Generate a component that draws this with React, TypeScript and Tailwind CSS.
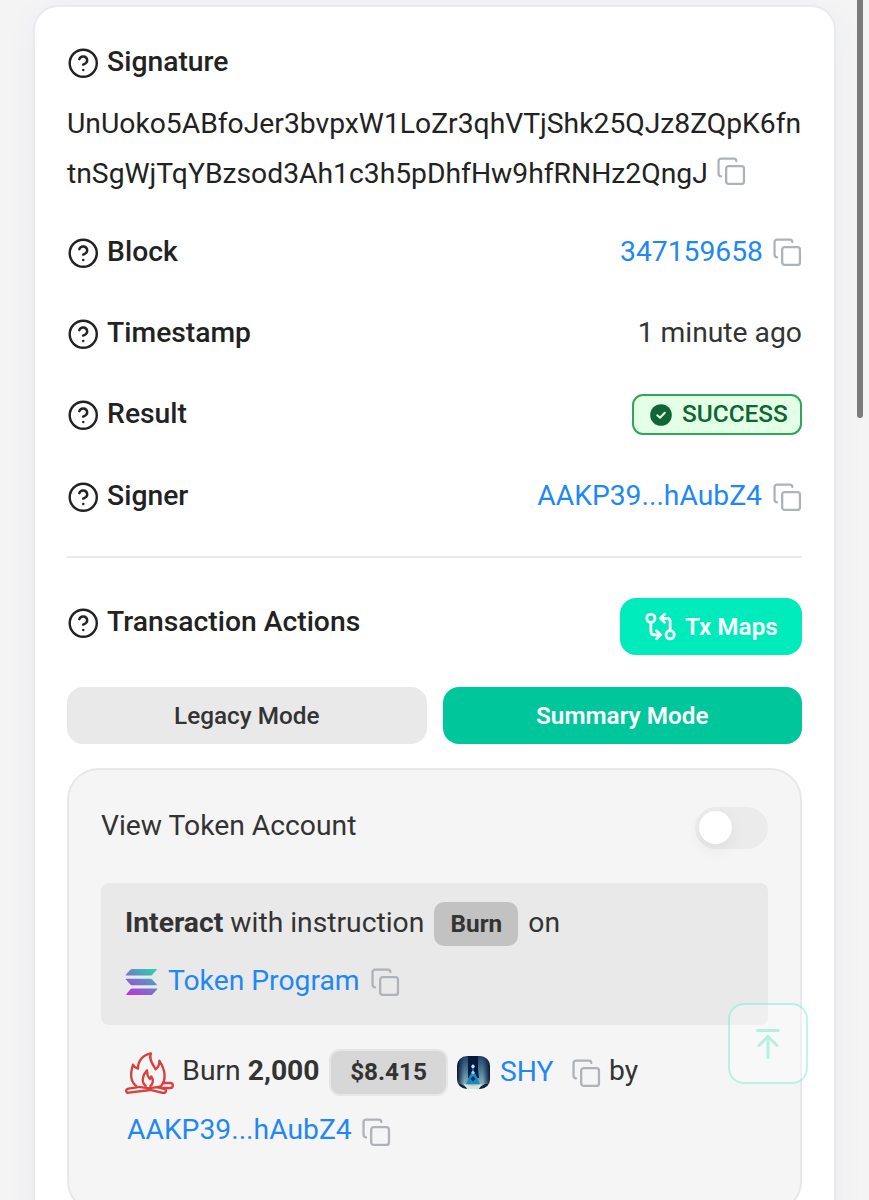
import type { ReactNode } from 'react';
import { ArrowUpToLine, GitCompareArrows } from 'lucide-react';

function HelpIcon() {
  return (
    <svg viewBox="0 0 24 24" fill="none" stroke="currentColor" strokeWidth="1.8" strokeLinecap="round" strokeLinejoin="round" className="mt-[2px] h-[32.5px] w-[32.5px] shrink-0">
      <circle cx="12" cy="12" r="10" />
      <path d="M9.09 9a3 3 0 0 1 5.83 1c0 2-3 3-3 3" />
      <path d="M12 17h.01" />
    </svg>
  );
}

function CopyIcon({ className = '' }: { className?: string }) {
  return (
    <svg viewBox="0 0 24 24" fill="none" stroke="#adb3b9" strokeWidth="1.8" strokeLinecap="round" strokeLinejoin="round" className={'h-[30.5px] w-[30.5px] shrink-0 ' + className}>
      <rect x="8" y="8" width="14" height="14" rx="2" />
      <path d="M4 16c-1.1 0-2-.9-2-2V4c0-1.1.9-2 2-2h10c1.1 0 2 .9 2 2" />
    </svg>
  );
}

function SolanaIcon() {
  return (
    <svg viewBox="0 0 33 26" className="mt-[2px] h-[26px] w-[33px] shrink-0">
      <defs>
        <linearGradient id="sol" gradientUnits="userSpaceOnUse" x1="27" y1="-3" x2="9" y2="29">
          <stop offset="0" stopColor="#1fe0a5" />
          <stop offset="0.5" stopColor="#6a80c8" />
          <stop offset="1" stopColor="#c22fe0" />
        </linearGradient>
      </defs>
      <g fill="url(#sol)">
        <path d="M5.6 .4Q6 0 6.8 0H31.2Q32.3 0 31.6 .9L27 6Q26.5 6.5 25.8 6.5H1.2Q.2 6.5 .9 5.600Z" />
        <path d="M5.600 15.800Q6 16.200 6.800 16.200H31.200Q32.300 16.200 31.600 15.300L27 10.200Q26.500 9.700 25.800 9.700H1.200Q.2 9.700 .9 10.600Z" />
        <path d="M5.600 19.900Q6 19.500 6.800 19.500H31.700Q32.800 19.500 32 20.400L27.400 25.500Q27 26 26.200 26H2Q.8 26 1.500 25Z" />
      </g>
    </svg>
  );
}

function FireIcon() {
  return (
    <svg viewBox="14 36 148 126" fill="none" stroke="#d93f3f" strokeWidth="7" strokeLinecap="round" strokeLinejoin="round" className="mt-[4px] h-[42px] w-[49.3px] shrink-0">
      <path d="M48 138C32 127 28 106 38 74C42 82 46 84 53 86C53 62 68 44 92 40C84 58 98 74 106 88C114 82 118 72 117 62C134 88 140 118 122 138" />
      <path d="M76 138C62 126 66 106 80 91C79 103 83 110 89 117C91 115 93 112 93 109C101 120 98 132 90 138" />
      <path d="M128 129H150C160 129 160 144 150 144H126" />
      <path d="M50 142L24 146C14 148 16 160 26 158L90 150L128 159C138 160 140 149 132 147L112 142M56 141Q86 148 118 140" />
    </svg>
  );
}

function ShyToken() {
  return (
    <svg viewBox="0 0 33 33" className="h-[33px] w-[33px] shrink-0">
      <defs>
        <linearGradient id="shyBg" x1="0" y1="0" x2="0" y2="1">
          <stop offset="0" stopColor="#24466d" />
          <stop offset="0.55" stopColor="#5f97ae" />
          <stop offset="1" stopColor="#bdd6da" />
        </linearGradient>
        <linearGradient id="shySide" x1="0" y1="0" x2="1" y2="0">
          <stop offset="0" stopColor="#0a1735" />
          <stop offset="0.22" stopColor="#0a1735" stopOpacity="0.1" />
          <stop offset="0.78" stopColor="#0a1735" stopOpacity="0.1" />
          <stop offset="1" stopColor="#0a1735" />
        </linearGradient>
        <clipPath id="shyClip"><rect width="33" height="33" rx="10" /></clipPath>
      </defs>
      <g clipPath="url(#shyClip)">
        <rect width="33" height="33" fill="url(#shyBg)" />
        <rect width="33" height="33" fill="url(#shySide)" />
        <path d="M11 0H21V13L22 22H11V13Z" fill="#071a3d" />
        <path d="M16 14L20 21L23 28H9L12 21Z" fill="#168bc2" />
        <path d="M16 8V25" stroke="#2f8fc4" strokeWidth="1.2" />
        <circle cx="16" cy="10.5" r="1.7" fill="#b8e8ff" />
        <circle cx="16" cy="16.5" r="1.6" fill="#8fdcff" />
        <path d="M13.500 23L16 20L18.500 23L16 25.500Z" fill="#0a2a5c" />
        <path d="M0 28H4L9 31H23L28 28H33V33H0Z" fill="#10203f" />
        <path d="M7 28Q16 31 25 28L22 33H10Z" fill="#d7e3e0" />
      </g>
    </svg>
  );
}

function Label({ children }: { children: ReactNode }) {
  return (
    <div className="flex h-[50px] items-center gap-[8px] font-medium text-[#222]">
      <HelpIcon />
      <span>{children}</span>
    </div>
  );
}

function Row({ label, className, children }: { label: string; className: string; children: ReactNode }) {
  return (
    <div className={'-ml-[0.4px] flex h-[50px] items-center justify-between ' + className}>
      <Label>{label}</Label>
      <div className="flex items-center">{children}</div>
    </div>
  );
}

export default function App() {
  return (
    <div className="relative h-[1200px] w-[869px] overflow-hidden bg-[#f4f4f5] pt-[5px] pl-[33px] font-[Roboto,sans-serif] text-[28.28px] leading-[50px] text-[#333]">
      <main className="h-[1300px] w-[803px] rounded-[25px] border-2 border-[#e8eaed] bg-white px-[32px] pt-[30px] shadow-[0_8px_32px_rgba(60,70,110,0.05)]">
        <div className="-ml-[0.4px]">
          <Label>Signature</Label>
        </div>
        <p className="mt-[12px] leading-[49.7px] whitespace-nowrap text-[#222]">
          UnUoko5ABfoJer3bvpxW1LoZr3qhVTjShk25QJz8ZQpK6fn
          <br />
          tnSgWjTqYBzsod3Ah1c3h5pDhfHw9hfRNHz2QngJ
          <CopyIcon className="mb-[8px] ml-[8px] inline-block align-middle" />
        </p>
        <Row label="Block" className="mt-[28.6px]">
          <a className="text-[#1e88f5]">347159658</a>
          <CopyIcon className="mt-[1px] ml-[8.5px]" />
        </Row>
        <Row label="Timestamp" className="mt-[31px]">
          <span>1 minute ago</span>
        </Row>
        <Row label="Result" className="mt-[31px]">
          <span className="flex h-[41px] w-[170px] items-center gap-[10px] rounded-[11px] border-2 border-[#2fa65c] bg-[#e3ffe6] pl-[16px] text-[24.4px] leading-[36px] font-medium text-[#0f6533]">
            <svg viewBox="0 0 22 22" className="mt-px h-[22px] w-[22px]">
              <circle cx="11" cy="11" r="10.8" fill="#0f6533" />
              <path d="M7.2 11.3L10 13.8L14.8 8.8" fill="none" stroke="#e3ffe6" strokeWidth="2" strokeLinecap="round" strokeLinejoin="round" />
            </svg>
            SUCCESS
          </span>
        </Row>
        <Row label="Signer" className="mt-[32px]">
          <a className="text-[#1e88f5]">AAKP39...hAubZ4</a>
          <CopyIcon className="mt-[2px] ml-[9.5px]" />
        </Row>
        <hr className="mt-[35px] border-t-2 border-[#e8eaed]" />
        <div className="mt-[40px] -ml-[0.4px] flex h-[57px] items-start justify-between">
          <div className="-mt-px">
            <Label>Transaction Actions</Label>
          </div>
          <button className="flex h-[57px] w-[182px] items-center gap-[8px] rounded-[16px] bg-[#00ebbb] pl-[24px] text-[24.3px] font-semibold text-white">
            <GitCompareArrows size={33} strokeWidth={2} />
            Tx Maps
          </button>
        </div>
        <div className="mt-[32px] flex gap-[16px] text-[24.3px] leading-[57px] font-semibold">
          <button className="h-[57px] flex-1 rounded-[16px] bg-[#e9e9e9] font-medium">Legacy Mode</button>
          <button className="h-[57px] flex-1 rounded-[16px] bg-[#00c69b] text-white">Summary Mode</button>
        </div>
        <section className="mt-[24px] h-[445px] rounded-[32px] border-2 border-[#e6e8ec] bg-[#f5f5f5] px-[32px] pt-[31px]">
          <div className="flex h-[50px] items-center justify-between">
            <span>View Token Account</span>
            <span className="mt-[3px] flex h-[42px] w-[73px] items-center rounded-full bg-[#ebebeb] pl-[4px]">
              <span className="mb-px h-[33px] w-[33px] rounded-full bg-white shadow-[0_6px_16px_rgba(0,0,0,0.06)]" />
            </span>
          </div>
          <div className="mt-[32px] h-[142px] rounded-[8px] bg-[#e9e9e9] px-[24px] pt-[15px]">
            <div className="flex h-[50px] items-center">
              <span><b>Interact</b> with instruction</span>
              <span className="mt-px mr-[10px] ml-[10px] flex h-[44px] w-[84px] items-center justify-center rounded-[10px] bg-[#c2c2c2] text-[24.3px] font-bold">Burn</span>
              <span>on</span>
            </div>
            <div className="mt-[8px] flex h-[50px] items-center">
              <SolanaIcon />
              <a className="ml-[10px] text-[#1e88f5]">Token Program</a>
              <CopyIcon className="mt-[2px] ml-[10px]" />
            </div>
          </div>
          <div className="mt-[21px] flex h-[50px] items-center pl-[24px]">
            <FireIcon />
            <span className="ml-[8px]">Burn <b>2,000</b></span>
            <span className="mt-[2px] ml-[9.5px] flex h-[47px] w-[119px] items-center justify-center rounded-[11px] border-2 border-[#e4e6e9] bg-[#d7d7d7] text-[24.3px] leading-[40px] font-bold">$8.415</span>
            <span className="mt-[2px] ml-[9px]"><ShyToken /></span>
            <a className="mt-[2px] ml-[10px] text-[#1e88f5]">SHY</a>
            <CopyIcon className="mt-[4px] ml-[17px]" />
            <span className="ml-[8px]">by</span>
          </div>
          <div className="mt-[9px] flex h-[50px] items-center pl-[26px]">
            <a className="text-[#1e88f5]">AAKP39...hAubZ4</a>
            <CopyIcon className="mt-[4px] ml-[9.5px]" />
          </div>
        </section>
      </main>
      <button className="absolute top-[1003px] left-[728px] flex h-[81px] w-[80px] items-center justify-center rounded-[16px] border-2 border-[#00dcaa]/25 bg-white/30 text-[#b5efe0]">
        <ArrowUpToLine size={36} strokeWidth={1.9} />
      </button>
      <div className="absolute top-[-10px] left-[857px] h-[428px] w-[6px] rounded-full bg-[#7b7b7b]" />
    </div>
  );
}
